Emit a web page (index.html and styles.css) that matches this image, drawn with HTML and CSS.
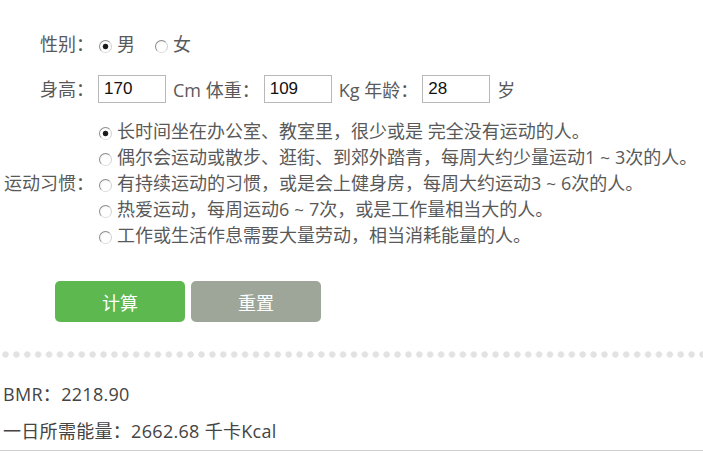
FILE: index.html
```html
<!DOCTYPE html>
<html lang="zh-CN">
<head>
<meta charset="utf-8">
<title>BMR 计算</title>
<link rel="stylesheet" href="styles.css">
</head>
<body>
<form class="calc">
  <div class="row row-gender">
    <span class="label">性别：</span>
    <label class="choice"><input type="radio" name="sex" checked><span>男</span></label>
    <label class="choice"><input type="radio" name="sex"><span>女</span></label>
  </div>
  <div class="row row-body">
    <span class="label">身高：</span>
    <input class="num" type="text" value="170">
    <span class="unit">Cm 体重：</span>
    <input class="num" type="text" value="109">
    <span class="unit">Kg 年龄：</span>
    <input class="num" type="text" value="28">
    <span class="unit">岁</span>
  </div>
  <div class="row row-habit">
    <span class="label label-wide">运动习惯：</span>
    <div class="options">
      <label class="choice"><input type="radio" name="habit" checked><span>长时间坐在办公室、教室里，很少或是 完全没有运动的人。</span></label>
      <label class="choice"><input type="radio" name="habit"><span>偶尔会运动或散步、逛街、到郊外踏青，每周大约少量运动1<span class="tilde">~</span>3次的人。</span></label>
      <label class="choice"><input type="radio" name="habit"><span>有持续运动的习惯，或是会上健身房，每周大约运动3<span class="tilde">~</span>6次的人。</span></label>
      <label class="choice"><input type="radio" name="habit"><span>热爱运动，每周运动6<span class="tilde">~</span>7次，或是工作量相当大的人。</span></label>
      <label class="choice"><input type="radio" name="habit"><span>工作或生活作息需要大量劳动，相当消耗能量的人。</span></label>
    </div>
  </div>
  <div class="buttons">
    <button type="button" class="btn btn-calc">计算</button>
    <button type="button" class="btn btn-reset">重置</button>
  </div>
</form>
<div class="dots"></div>
<div class="result">
  <p class="res-line">BMR：2218.90</p>
  <p class="res-line">一日所需能量：2662.68 千卡Kcal</p>
</div>
</body>
</html>
```

FILE: styles.css
```css
html, body {
  margin: 0;
  padding: 0;
  background: #fff;
}
body {
  width: 703px;
  font-family: "Open Sans", "Noto Sans CJK SC", sans-serif;
  font-size: 18px;
  color: #595959;
}
.calc {
  padding-top: 31px;
}
.row {
  display: flex;
  align-items: center;
}
.label {
  width: 94px;
  text-align: right;
  flex: none;
  white-space: nowrap;
  line-height: 26px;
}
.row-gender {
  height: 26px;
}
.row-body {
  margin-top: 18px;
  height: 28px;
}
.row-habit {
  margin-top: 15px;
}
.choice {
  display: flex;
  align-items: center;
  line-height: 26px;
  height: 26px;
  white-space: nowrap;
}
.row-gender .choice + .choice {
  margin-left: 15px;
}
.tilde {
  display: inline-block;
  margin: 0 5px;
  font-size: 17px;
}
.choice input {
  appearance: none;
  -webkit-appearance: none;
  box-sizing: border-box;
  width: 13px;
  height: 13px;
  margin: 4px 5px 0 5px;
  border-radius: 50%;
  border: 1.5px solid #8c8c8c;
  border-right-color: #d0d0d0;
  border-bottom-color: #dcdcdc;
  background: radial-gradient(circle at 60% 65%, #fff 0, #fff 45%, #ececec 100%);
  flex: none;
}
.choice input:checked {
  background: radial-gradient(circle at 50% 50%, #111 0, #222 2.4px, #fff 3.2px, #fff 100%);
}
.num {
  width: 68px;
  height: 28px;
  box-sizing: border-box;
  margin: 0 0 0 4px;
  padding: 0 5px;
  border: 1px solid #b8b8b8;
  font-family: "Liberation Sans", Arial, sans-serif;
  font-size: 17px;
  color: #111;
  background: #fff;
  outline: none;
}
.unit {
  margin: 0 0 0 7px;
  white-space: nowrap;
}
.options {
  display: flex;
  flex-direction: column;
}
.buttons {
  display: flex;
  gap: 6px;
  margin: 33px 0 0 55px;
}
.btn {
  width: 130px;
  height: 41px;
  border: none;
  border-radius: 5px;
  font-family: "Noto Sans CJK SC", sans-serif;
  font-size: 18px;
  color: #fff;
  padding: 0;
}
.btn-calc {
  background: #5cb84f;
}
.btn-reset {
  background: #9ea69a;
}
.dots {
  margin-top: 29px;
  height: 7px;
  background-image: radial-gradient(circle at 3.5px 3.5px, #e2e2e2 0, #e2e2e2 2.8px, rgba(255,255,255,0) 3.6px);
  background-size: 10.9px 7px;
  background-repeat: repeat-x;
  background-position: 2px 0;
}
.result {
  margin-top: 18px;
  border-bottom: 1px solid #cfcfcf;
  padding: 0 0 0 3px;
  color: #444;
  letter-spacing: 0.3px;
}
.res-line {
  margin: 0;
  line-height: 37px;
}
```
